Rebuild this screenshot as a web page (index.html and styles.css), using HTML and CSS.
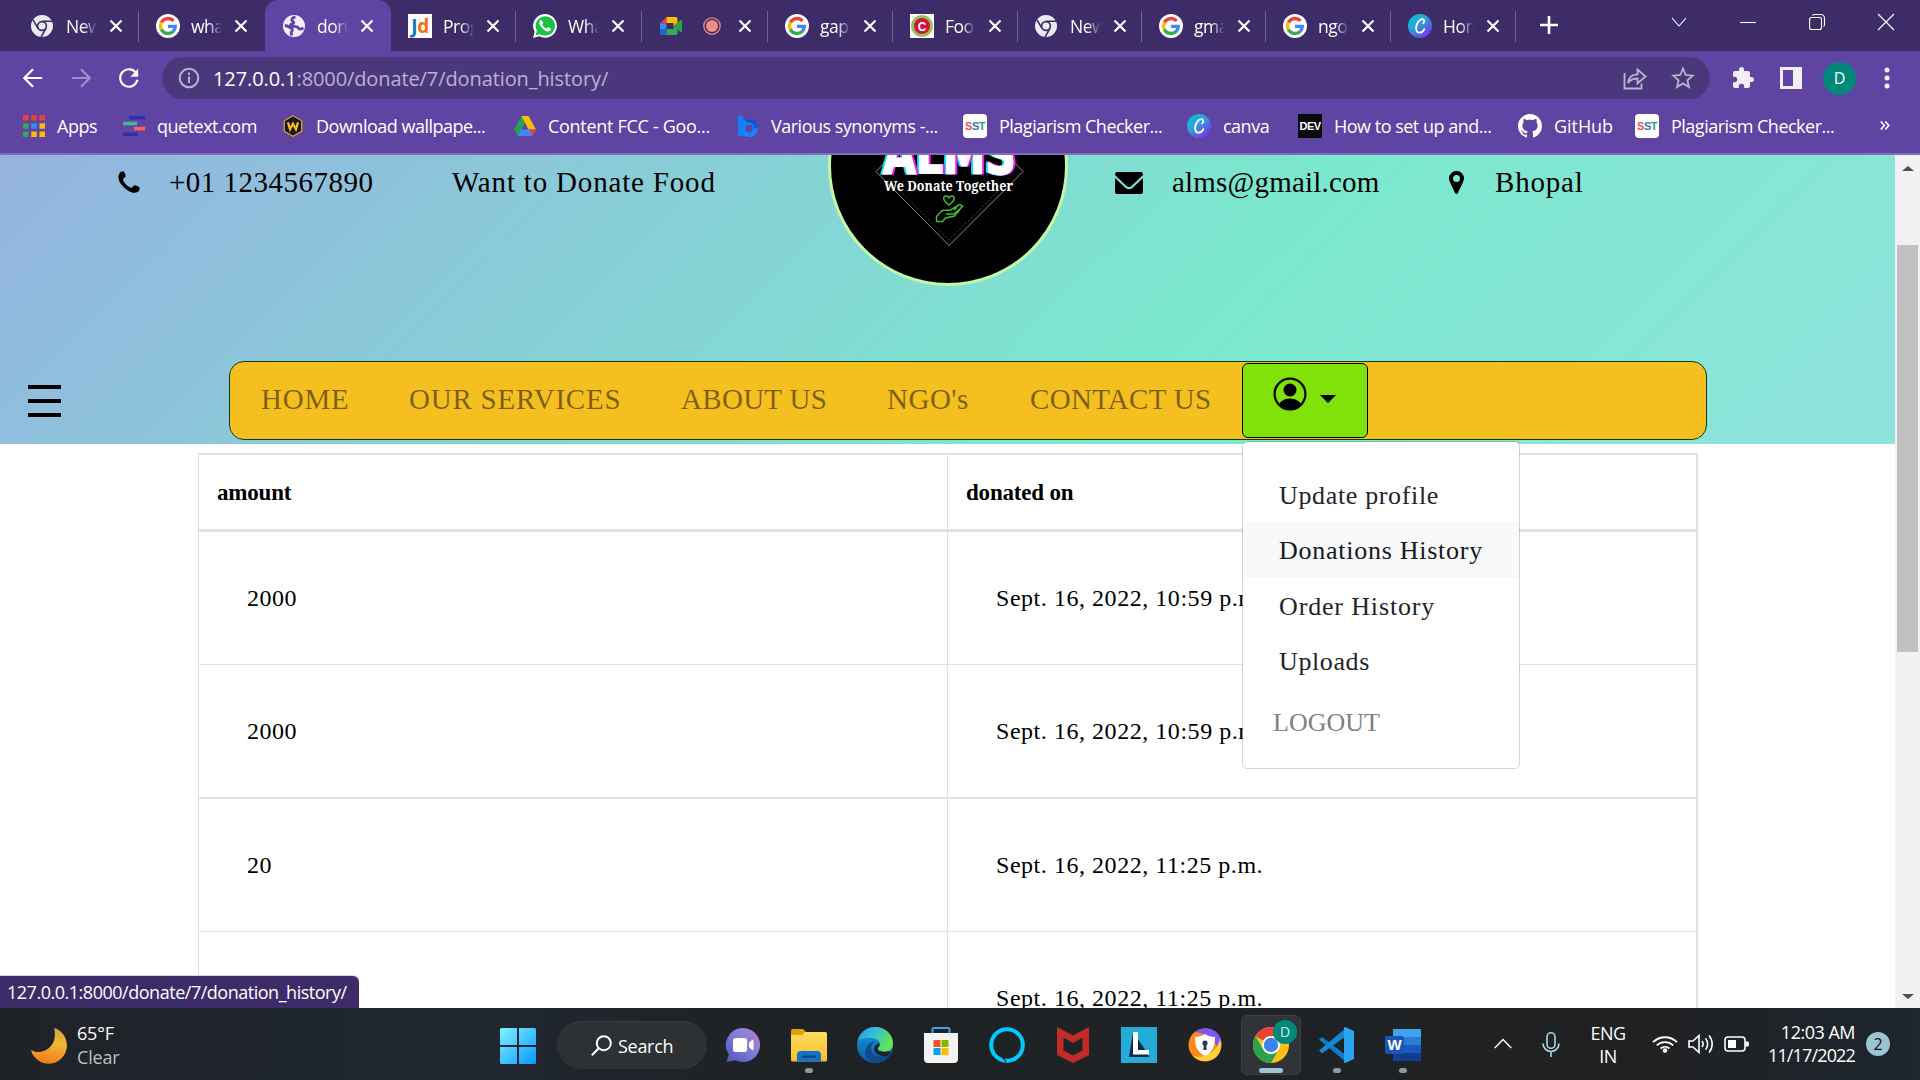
FILE: index.html
```html
<!DOCTYPE html>
<html lang="en">
<head>
<meta charset="utf-8">
<title>donation history</title>
<link rel="stylesheet" href="styles.css">
</head>
<body>
<svg class="defs" width="0" height="0">
  <defs>
    <linearGradient id="gCanva" x1="0" y1="0" x2=".8" y2="1"><stop offset="0" stop-color="#00c4cc"/><stop offset=".45" stop-color="#2aa5dc"/><stop offset="1" stop-color="#7d2ae8"/></linearGradient>
    <linearGradient id="gMoon" x1=".6" y1="0" x2=".4" y2="1"><stop offset="0" stop-color="#d9a04a"/><stop offset=".4" stop-color="#f2b632"/><stop offset="1" stop-color="#ee7d1c"/></linearGradient>
    <linearGradient id="gWin" x1="0" y1="0" x2="1" y2="1"><stop offset="0" stop-color="#7df4ff"/><stop offset="1" stop-color="#0a97ff"/></linearGradient>
    <linearGradient id="gChat" x1="0" y1="1" x2="1" y2="0"><stop offset="0" stop-color="#4f52c4"/><stop offset=".6" stop-color="#8482dc"/><stop offset="1" stop-color="#c07ab8"/></linearGradient>
    <linearGradient id="gFolder" x1="0" y1="0" x2="0" y2="1"><stop offset="0" stop-color="#ffdc60"/><stop offset="1" stop-color="#f9be2c"/></linearGradient>
    <linearGradient id="gEdge" x1="0" y1="0" x2="1" y2=".4"><stop offset="0" stop-color="#1f9fe0"/><stop offset=".5" stop-color="#35c1d8"/><stop offset="1" stop-color="#62e552"/></linearGradient>
    <linearGradient id="gEdge2" x1="0" y1="0" x2="0" y2="1"><stop offset="0" stop-color="#1b9de2"/><stop offset="1" stop-color="#0c59a8"/></linearGradient>
    <symbol id="chrome-grey" viewBox="0 0 24 24">
      <circle cx="12" cy="12" r="12" fill="#eceaf2"/>
      <circle cx="12" cy="12" r="5.7" fill="#3d2c68"/><circle cx="12" cy="12" r="3.9" fill="#eceaf2"/>
      <path d="M12 6.900h11M7.600 14.600 2.200 5.200M16.400 14.600 11 24" stroke="#3d2c68" stroke-width="1.700" fill="none"/>
    </symbol>
    <symbol id="google" viewBox="0 0 24 24">
      <circle cx="12" cy="12" r="12" fill="#fff"/>
      <g fill="none" stroke-width="3.300">
        <path d="M17.600 6.900A7.500 7.500 0 0 0 5.400 8.600" stroke="#ea4335"/>
        <path d="M5.400 8.500a7.500 7.500 0 0 0 0 7" stroke="#fbbc05"/>
        <path d="M5.400 15.400a7.500 7.500 0 0 0 11.800 2" stroke="#34a853"/>
        <path d="M17.100 17.500a7.500 7.500 0 0 0 2.300-5.200H12" stroke="#4285f4"/>
      </g>
    </symbol>
    <symbol id="canva" viewBox="0 0 24 24">
      <circle cx="12" cy="12" r="12" fill="url(#gCanva)"/>
      <path d="M15.200 9.400c1.300-1 1.600-4-.5-4.200-3.500-.2-6.600 4.600-6.600 8.900 0 3 1.600 4.600 3.500 4.600 2.200 0 3.900-1.700 4.700-3.600" fill="none" stroke="#fff" stroke-width="1.800" stroke-linecap="round"/>
    </symbol>
    <symbol id="x" viewBox="0 0 14 14"><path d="m1.500 1.500 11 11m0-11-11 11" stroke="#fff" stroke-width="2.200" fill="none"/></symbol>
  </defs>
</svg>

<div class="tabs">
  <div class="tab-list">
    <div class="tab"><svg class="fav s"><use href="#chrome-grey"/></svg><span class="title">New</span><svg class="close"><use href="#x"/></svg></div>
    <div class="tab nosep"><svg class="fav"><use href="#google"/></svg><span class="title">wha</span><svg class="close"><use href="#x"/></svg></div>
    <div class="tab active"><svg class="fav" viewBox="0 0 24 24"><circle cx="12" cy="12" r="11" fill="#f1eff8"/><path d="M13.500 3.200c-4 .3-4.500 3-2.500 4.300 1.500 1 .5 2.500-1.500 2.700-1.500.2-1.200 1.800.5 2.100 3 .4 5.500-.3 6.500 2 .5 1.300 2.500 1 5-.3M2.800 11.500c3 .2 4.700 2 6.200 2.600 1.700.8 2 2.400.5 3.700-.8.700-.4 2 .5 3.700" fill="none" stroke="#5f44a3" stroke-width="2.800"/></svg><span class="title">don</span><svg class="close"><use href="#x"/></svg></div>
    <div class="tab"><span class="fav jd"><b>J</b><i>d</i></span><span class="title">Prog</span><svg class="close"><use href="#x"/></svg></div>
    <div class="tab"><svg class="fav" viewBox="0 0 24 24"><path d="M0 24l1.700-6.200A11.900 11.900 0 1 1 6.300 22.300z" fill="#fff"/><path d="M2.600 21.400l1.300-4.600A9.700 9.700 0 1 1 7.200 20.200z" fill="#19c144"/><path d="M8.700 6.500c-.4-.9-1-.6-1.500-.3C5.500 8 6.200 10.300 8.200 12.900c2.600 3.400 5.200 4.600 7.300 4.500 1.500-.2 2.500-1.300 2.600-2.800l-3-1.500c-.7.400-1 1.500-1.800 1.300-1.700-.7-3.200-2.100-4-3.700 0-.6 1.100-1 .9-1.900z" fill="#fff"/></svg><span class="title">Wha</span><svg class="close"><use href="#x"/></svg></div>
    <div class="tab"><svg class="fav" viewBox="0 0 24 24"><path d="M1 9.500 7.500 3v6.500z" fill="#ea4335"/><path d="M7.500 3H17q1.500 0 1.500 1.500V10l-4 2V9h-7z" fill="#fbbc04"/><path d="M1 9.500h6.500V15H1z" fill="#4285f4"/><path d="M1 15h6.500v6H2.500Q1 21 1 19.500z" fill="#1967d2"/><path d="M7.500 15h7v-3l4 3v4.500q0 1.500-1.500 1.500H7.500z" fill="#34a853"/><path d="m14.500 12 7-6q1.500-.7 1.500 1v10q0 1.700-1.500 1z" fill="#2ba14b"/></svg><svg class="rec" viewBox="0 0 18 18"><circle cx="9" cy="9" r="8.200" fill="none" stroke="#f28b82" stroke-width="1.300"/><circle cx="9" cy="9" r="6" fill="#f28b82"/></svg><svg class="close"><use href="#x"/></svg></div>
    <div class="tab"><svg class="fav"><use href="#google"/></svg><span class="title">gap</span><svg class="close"><use href="#x"/></svg></div>
    <div class="tab"><svg class="fav" viewBox="0 0 24 24"><path d="M0 0h24v24H0z" fill="#fff"/><circle cx="12" cy="12" r="11" fill="#94c45e"/><circle cx="12" cy="12" r="8" fill="#d3123f"/><text x="12" y="16.500" text-anchor="middle" class="c-mark">C</text></svg><span class="title">Foo</span><svg class="close"><use href="#x"/></svg></div>
    <div class="tab"><svg class="fav s"><use href="#chrome-grey"/></svg><span class="title">New</span><svg class="close"><use href="#x"/></svg></div>
    <div class="tab"><svg class="fav"><use href="#google"/></svg><span class="title">gma</span><svg class="close"><use href="#x"/></svg></div>
    <div class="tab"><svg class="fav"><use href="#google"/></svg><span class="title">ngo</span><svg class="close"><use href="#x"/></svg></div>
    <div class="tab"><svg class="fav"><use href="#canva"/></svg><span class="title">Hon</span><svg class="close"><use href="#x"/></svg></div>
  </div>
  <svg class="plus" viewBox="0 0 18 18"><path d="M9 0v18M0 9h18" stroke="#fff" stroke-width="2.600"/></svg>
  <div class="win-controls">
    <svg viewBox="0 0 16 16"><path d="m1 4 7 8 7-8" /></svg>
    <svg viewBox="0 0 16 16"><path d="M0 8.500h16"/></svg>
    <svg viewBox="0 0 16 16"><rect x=".6" y="3.500" width="11.900" height="12" rx="2"/><path d="M3.500 1.500q.5-1 2-1h6q4 0 4 4v6q0 1.500-1 2"/></svg>
    <svg viewBox="0 0 16 16"><path d="m0 0 16 16M16 0 0 16"/></svg>
  </div>
</div>

<div class="toolbar">
  <svg class="nav-ico" viewBox="0 0 24 24"><path d="M22 12H3M12 2.500 2.500 12l9.500 9.500"/></svg>
  <svg class="nav-ico dim" viewBox="0 0 24 24"><path d="M2 12h19M12 2.500l9.500 9.500-9.500 9.500"/></svg>
  <svg class="nav-ico" viewBox="0 0 24 24"><path d="M20.300 7.500A9.500 9.500 0 1 0 21.200 14"/><path d="M22 2v8.500h-8.500z" class="solid"/></svg>
  <div class="omnibox">
    <svg class="info" viewBox="0 0 22 22"><circle cx="11" cy="11" r="9.300"/><path d="M11 9.500v6.500M11 5.600v2.400"/></svg>
    <span class="url"><b>127.0.0.1</b>:8000/donate/7/donation_history/</span>
    <svg class="share" viewBox="0 0 24 24"><path d="M1.500 7v15.500h17v-5"/><path d="M5 17c.5-5 3.500-8.500 9.500-8.700V3.500l8 7-8 6.700V12.500C10 12.500 7 14 5 17z"/></svg>
    <svg class="star" viewBox="0 0 24 24"><path d="m12 2.500 2.700 6.500 7 .6-5.300 4.600 1.600 6.900-6-3.700-6 3.700 1.600-6.900L2.300 9.600l7-.6z"/></svg>
  </div>
  <svg class="ext" viewBox="0 0 24 24"><path d="M20.500 11H19V7c0-1.100-.9-2-2-2h-4V3.500a2.500 2.500 0 0 0-5 0V5H4C2.900 5 2 5.900 2 7v3.800h1.500a2.700 2.700 0 0 1 0 5.400H2V20c0 1.100.9 2 2 2h3.800v-1.500a2.700 2.700 0 0 1 5.400 0V22H17c1.100 0 2-.9 2-2v-4h1.500a2.500 2.500 0 0 0 0-5z" fill="#f1eff8"/></svg>
  <span class="panel"></span>
  <span class="avatar">D</span>
  <svg class="dots" viewBox="0 0 6 22"><g fill="#f1eff8"><circle cx="3" cy="3" r="2.500"/><circle cx="3" cy="11" r="2.500"/><circle cx="3" cy="19" r="2.500"/></g></svg>
</div>

<div class="bookmarks">
  <div class="bm"><svg viewBox="0 0 20 20"><g fill="#ea4335"><path d="M0 0h5v5H0zM7.500 0h5v5h-5zM15 0h5v5h-5z"/></g><path d="M0 7.500h5v5H0zM0 15h5v5H0z" fill="#34a853"/><path d="M7.500 7.500h5v5h-5z" fill="#2f8df5"/><path d="M15 7.500h5v5h-5zM7.500 15h5v5h-5zM15 15h5v5h-5z" fill="#fbbc04"/></svg><span>Apps</span></div>
  <div class="bm"><svg viewBox="0 0 22 20"><path d="M6 0h16v3.500H6zM0 16.500h15V20H0z" fill="#2f2fa8"/><path d="M0 5.700h14v3.600H0z" fill="#3fb8a0"/><path d="M11 10.800h11v3.600H11z" fill="#f75f63"/></svg><span>quetext.com</span></div>
  <div class="bm"><svg viewBox="0 0 22 24"><path d="m11 .8 9.500 5.500v11.500L11 23.200 1.500 17.800V6.300z" fill="#14182c" stroke="#d49a25" stroke-width="1.500"/><path d="m5.500 8 2.300 7.500L11 9.500l3.200 6L16.500 8" fill="none" stroke="#fbb41c" stroke-width="2.500"/></svg><span>Download wallpape...</span></div>
  <div class="bm"><svg viewBox="0 0 22 20"><path d="M7.500 0h7L4 20 0 13.500z" fill="#21a453"/><path d="M7.500 0h7l7.500 13.500h-7.500z" fill="#fbbc04"/><path d="M7 13.500h15L18 20H4z" fill="#4285f4"/><path d="M15 13.500h7L18.500 20z" fill="#ea4335"/></svg><span class="tight-less">Content FCC - Goo...</span></div>
  <div class="bm"><svg viewBox="0 0 22 24"><circle cx="12" cy="14.500" r="7" fill="none" stroke="#1488fb" stroke-width="5.500"/><path d="M9 6.500c6-1 11 2 10.500 8" fill="none" stroke="#0f55d8" stroke-width="4"/><path d="M0 0l6 2v17c0 4-2 4-6 4z" fill="#1380f5"/></svg><span>Various synonyms -...</span></div>
  <div class="bm"><span class="sst"><i>S</i><b>S</b><u>T</u></span><span>Plagiarism Checker...</span></div>
  <div class="bm"><svg class="big"><use href="#canva"/></svg><span>canva</span></div>
  <div class="bm"><span class="dev">DEV</span><span>How to set up and...</span></div>
  <div class="bm"><svg class="big" viewBox="0 0 16 16"><path fill="#fff" d="M8 0C3.580 0 0 3.580 0 8c0 3.540 2.290 6.530 5.470 7.590.4.070.55-.17.55-.38 0-.19-.01-.82-.01-1.490-2.010.37-2.530-.49-2.690-.94-.09-.23-.48-.94-.82-1.130-.28-.15-.68-.52-.01-.53.630-.010 1.080.580 1.230.820.720 1.210 1.870.870 2.330.660.070-.520.280-.870.510-1.070-1.780-.200-3.640-.890-3.640-3.950 0-.870.310-1.590.820-2.150-.080-.200-.360-1.020.080-2.120 0 0 .670-.210 2.200.820.640-.180 1.320-.270 2-.270s1.360.090 2 .270c1.530-1.040 2.200-.820 2.200-.820.440 1.100.160 1.920.080 2.120.510.560.820 1.270.820 2.150 0 3.070-1.870 3.750-3.650 3.950.290.250.540.730.540 1.480 0 1.070-.010 1.930-.010 2.200 0 .210.150.460.550.380A8.010 8.010 0 0 0 16 8c0-4.420-3.580-8-8-8z"/></svg><span class="github">GitHub</span></div>
  <div class="bm"><span class="sst"><i>S</i><b>S</b><u>T</u></span><span>Plagiarism Checker...</span></div>
  <svg class="more" viewBox="0 0 10 9"><path d="m.8.500 3.500 4-3.500 4M5.300.500l3.500 4-3.500 4"/></svg>
</div>

<div class="viewport">
  <div class="page">
    <header class="hero">
      <div class="contact">
        <svg class="phone" viewBox="0 0 22 22"><path d="M1.500 2.200C2.500.8 4.800 0 5.800.5c1 1 2 4 1.800 5C7.200 6.500 5 7.200 5 8.500c.5 3 5 7.600 8.200 8.200 1.300.1 2.300-2.200 3.300-2.500 1-.2 4 1.400 5 2.300.5 1-.4 3.400-1.700 4.300-2.300 1.600-6 1.200-9.500-1.100C5.500 17 1.500 12 .6 8 .2 6 .4 4 1.500 2.200z"/></svg>
        <span class="c-phone">+01 1234567890</span>
        <span class="c-want">Want to Donate Food</span>
        <svg class="logo" viewBox="828 155 240 131">
          <circle cx="948" cy="166" r="118.500" fill="#000" stroke="#c3f7a4" stroke-width="3"/>
          <path d="m890 157-14 14.500 73 74 74-74-14-14.500" fill="none" stroke="#8c8c8c"/>
          <path d="m900 191 49 49 49-49" fill="none" stroke="#444" stroke-dasharray="2 2"/>
          <text class="alms" x="883" y="173" textLength="133" lengthAdjust="spacingAndGlyphs">ALMS</text>
          <text class="motto" x="884" y="191" textLength="129" lengthAdjust="spacingAndGlyphs">We Donate Together</text>
          <g fill="none" stroke="#48b838" stroke-width="1.500"><path d="M949 205c-7-5-6-9-3-9 1.500 0 2.500 1 3 2 .5-1 1.500-2 3-2 3 0 4 4-3 9z"/><path d="M936.500 221.500v-5l5-5.500c3-1.500 6 0 9-1l9-5.500 3 1.500-8 10-9 2-3 3.500zM946 214h8l7-6M954 210l3-3"/></g>
        </svg>
        <svg class="mail" viewBox="0 0 28 22"><path d="M2 0h24q2 0 2 3L16.500 14q-2.500 2.200-5 0L0 3q0-3 2-3z"/><path d="m0 6 10.500 10q3.500 2.500 7 0L28 6v14q0 2-2 2H2q-2 0-2-2z"/></svg>
        <span class="c-mail">alms@gmail.com</span>
        <svg class="pin" viewBox="0 0 15 23"><path fill-rule="evenodd" d="M7.500 0A7.300 7.300 0 0 1 15 7.500c0 3-4 9.500-6 14.500q-1.500 1.800-3 0C4 17 0 10.500 0 7.500A7.300 7.300 0 0 1 7.500 0zm0 4a3.500 3.500 0 1 0 0 7 3.500 3.500 0 0 0 0-7z"/></svg>
        <span class="c-city">Bhopal</span>
      </div>
      <div class="nav-row">
        <div class="burger"><i></i><i></i><i></i></div>
        <nav class="navbar">
          <a class="n1">HOME</a><a class="n2">OUR SERVICES</a><a class="n3">ABOUT US</a><a class="n4">NGO's</a><a class="n5">CONTACT US</a>
          <div class="user">
            <svg viewBox="0 0 34 34"><defs><clipPath id="uc"><circle cx="17" cy="17" r="16"/></clipPath></defs><circle cx="17" cy="17" r="15.400" fill="none" stroke="#000" stroke-width="2.200"/><circle cx="17" cy="13" r="6.500"/><ellipse cx="17" cy="30" rx="11.500" ry="8.500" clip-path="url(#uc)"/></svg>
            <span class="caret"></span>
            <div class="menu">
              <a class="m1">Update profile</a><a class="hover m2">Donations History</a><a class="m3">Order History</a><a class="m4">Uploads</a><a class="logout">LOGOUT</a>
            </div>
          </div>
        </nav>
      </div>
    </header>
    <div class="table">
      <div class="row head"><div>amount</div><div>donated on</div></div>
      <div class="row"><div>2000</div><div>Sept. 16, 2022, 10:59 p.m.</div></div>
      <div class="row thick"><div>2000</div><div>Sept. 16, 2022, 10:59 p.m.</div></div>
      <div class="row"><div>20</div><div>Sept. 16, 2022, 11:25 p.m.</div></div>
      <div class="row"><div>20</div><div>Sept. 16, 2022, 11:25 p.m.</div></div>
    </div>
  </div>
  <div class="scrollbar"><span class="up"></span><span class="thumb"></span><span class="down"></span></div>
  <div class="status">127.0.0.1:8000/donate/7/donation_history/</div>
</div>

<div class="taskbar">
  <div class="weather">
    <svg viewBox="0 0 36 36"><path d="M23 0C33 3 38 13 35 23 31 35 17 39 8 33 4 30 1 27 0 22c5 3 12 3 18-2 6-5 7-13 5-20z" fill="url(#gMoon)"/></svg>
    <div><span class="temp">65°F</span><span class="clear">Clear</span></div>
  </div>
  <svg class="start" viewBox="0 0 36 36"><path d="M1.500 0H17v17H0V1.500Q0 0 1.500 0zM19 0h15.500Q36 0 36 1.500V17H19zM0 19h17v17H1.500Q0 36 0 34.500zM19 19h17v15.500q0 1.500-1.500 1.500H19z" fill="url(#gWin)"/></svg>
  <div class="search"><svg viewBox="0 0 20 20"><circle cx="12.200" cy="7.800" r="6.700"/><path d="M7.400 12.600.8 19.300"/></svg><span>Search</span></div>
  <div class="apps">
    <div class="app"><svg viewBox="0 0 36 36"><path d="M18 1a17 17 0 1 1-7.500 32.200L1.500 35l2.300-7.500A17 17 0 0 1 18 1z" fill="url(#gChat)"/><rect x="8" y="11" width="14" height="14" rx="2.500" fill="#fff"/><path d="m24 16 3-3q1.500-.8 1.500 1v8q0 1.800-1.500 1l-3-3z" fill="#fff"/></svg></div>
    <div class="app run"><svg viewBox="0 0 36 36"><path d="M0 10V3.500Q0 2 1.500 2H12l3 3v6z" fill="#e2a100"/><path d="M0 8h11l3-3h20.500Q36 5 36 6.500V33q0 1.500-1.500 1.500h-33Q0 34.500 0 33z" fill="url(#gFolder)"/><path d="M6 34.500V28q0-4 4-4h16q4 0 4 4v6.500z" fill="#1173c8"/><path d="M11 29.500h14" stroke="#073d77" stroke-width="2"/></svg></div>
    <div class="app"><svg viewBox="0 0 36 36"><circle cx="18" cy="18" r="18" fill="url(#gEdge2)"/><path d="M1 13C4 4 11 0 18 0c11 0 18 8 18 16 0 6-4 9-9 9-4 0-6-1-6-3s2-2 2-5c0-4-5-6-9-6-6 0-11 1-13 2z" fill="url(#gEdge)"/><path d="M14 21c0 6 6 11 19 7-3 5-8 8-15 8C10 35 7 28 9 22c1-4 5-7 9-8-2 2-4 4-4 7z" fill="#114a8b"/><path d="M22 16c2 3-2 4-1 6.500 1 2 7 3 11 1.500l2 1.500-2.500 3c-8 2-14.500-2-14.500-6.500 0-3 2-5 5-6z" fill="#1f242a"/></svg></div>
    <div class="app"><svg viewBox="0 0 36 36"><path d="M9.500 8V2.500q0-1.500 1.500-1.500h14q1.500 0 1.500 1.500V8" fill="none" stroke="#37a6ee" stroke-width="2"/><path d="M1 6h34v26q0 4-4 4H5q-4 0-4-4z" fill="#f3f3f3"/><path d="M10.500 13h7v7h-7z" fill="#f25022"/><path d="M18.500 13h7v7h-7z" fill="#7fba00"/><path d="M10.500 21h7v7h-7z" fill="#00a4ef"/><path d="M18.500 21h7v7h-7z" fill="#ffb900"/></svg></div>
    <div class="app"><svg viewBox="0 0 36 36"><circle cx="18" cy="18" r="15.800" fill="none" stroke="#00caff" stroke-width="4"/><path d="M13.500 31c2 .8 3 1.800 3.300 4.500" fill="none" stroke="#1f2326" stroke-width="1.200"/></svg></div>
    <div class="app"><svg viewBox="0 0 36 36"><path d="m2 0 16 8.500L34 0v28l-16 8L2 28zM8.500 10.500v13L18 28.500l9.500-5v-13L18 16z" fill="#c32b2b" fill-rule="evenodd"/></svg></div>
    <div class="app"><svg viewBox="0 0 36 36"><path d="M0 0h36v36H0z" fill="#24acd9"/><path d="m12 5-4 25h20l-1-3z" fill="#0d2b4d"/><path d="M12 5h5v18h11v4.500H12z" fill="#fff"/></svg></div>
    <div class="app"><svg viewBox="0 0 36 36"><circle cx="18" cy="18" r="16.500" fill="#ff8a1c"/><path d="M8 5C16-1 28 0 33 10c3 6 1 12-2 16 0-10-8-19-23-21z" fill="#8155f0"/><path d="M33 12c4 12-4 22-15 22-5 0-9-2-12-5 10 3 24-3 27-17z" fill="#ffd23c"/><path d="M18 7c3 2 6 3 10 3 0 9-2 15-10 19C10 25 8 19 8 10c4 0 7-1 10-3z" fill="#fff"/><circle cx="18" cy="16" r="2.600" fill="#2c3655"/><path d="m16.800 17-.5 6h3.400l-.5-6z" fill="#2c3655"/></svg></div>
    <div class="app run current"><svg viewBox="0 0 36 36"><circle cx="18" cy="18" r="18" fill="#fbc116"/><path d="M18 0A18 18 0 0 1 33.600 9H18a9 9 0 0 0-7.800 4.500L2.400 9A18 18 0 0 1 18 0z" fill="#ea4335"/><path d="M2.400 9a18 18 0 0 0 15.600 27l7.800-13.500a9 9 0 0 1-15.600 0z" fill="#2ba24c"/><circle cx="18" cy="18" r="9" fill="#fff"/><circle cx="18" cy="18" r="7.200" fill="#3b82f0"/></svg><span class="badge">D</span></div>
    <div class="app run"><svg viewBox="0 0 36 36"><path d="M0 12.500 3 10l24 18v7z" fill="#0f7cc6"/><path d="M0 23.500 3 26.500 27 9V1z" fill="#1488d4"/><path d="M26 0l9 4v28l-9 4q-1.500 0-1-3V3q-.5-3 1-3z" fill="#2aa4f2"/></svg></div>
    <div class="app run"><svg viewBox="0 0 36 36"><path d="M8 2h28v9H8z" fill="#41a5ee"/><path d="M8 10h28v8H8z" fill="#2b7cd3"/><path d="M8 18h28v8H8z" fill="#185abd"/><path d="M8 26h28v8H8z" fill="#103f91"/><rect y="9" width="19" height="18" rx="2" fill="#1a56b8"/><text x="9.500" y="23" text-anchor="middle" class="w-mark">W</text></svg></div>
  </div>
  <div class="tray">
    <svg class="chev" viewBox="0 0 18 11"><path d="m.7 10 8.300-8.500L17.300 10" stroke="#fff" stroke-width="1.400" fill="none"/></svg>
    <svg class="mic" viewBox="0 0 18 25"><g fill="none" stroke="#a9dbe6" stroke-width="1.600"><rect x="5" y=".8" width="8" height="15.500" rx="4"/><path d="M1 11.500a8 8 0 0 0 16 0M9 19.500V25"/></g></svg>
    <div class="lang"><span>ENG</span><span>IN</span></div>
    <svg class="wifi" viewBox="0 0 26 19"><g fill="none" stroke="#fff" stroke-width="1.800"><path d="M1 8.200a17 17 0 0 1 24 0M4.800 11.400a12 12 0 0 1 16.400 0M8.500 14.500a7 7 0 0 1 9 0"/></g><circle cx="13" cy="16.500" r="2.300" fill="#fff"/></svg>
    <svg class="vol" viewBox="0 0 26 20"><g fill="none" stroke="#fff" stroke-width="1.600"><path d="M1 7h4l6-5.500v17L5 13H1zM14 7a5 5 0 0 1 0 6M17.500 4.200a9 9 0 0 1 0 11.600M21 1.500a13 13 0 0 1 0 17"/></g></svg>
    <svg class="bat" viewBox="0 0 25 16"><rect x="1" y="1" width="20" height="14" rx="3" fill="none" stroke="#fff" stroke-width="1.600"/><path d="M4 4h8v8H4zM21.500 5.500H24q1 0 1 2.500t-1 2.500h-2.500z" fill="#fff"/></svg>
    <div class="clock"><span>12:03 AM</span><span class="date">11/17/2022</span></div>
    <span class="count">2</span>
  </div>
</div>
</body>
</html>
```
FILE: styles.css
```css
* { box-sizing: border-box; }
body { margin: 0; width: 1920px; height: 1080px; overflow: hidden; background: #fff; font-family: "Open Sans", "Noto Sans", sans-serif; color: #fff; display: flex; flex-direction: column; }
svg { display: block; flex: none; }
.defs { position: absolute; }

/* tab strip */
.tabs { height: 51px; flex: none; background: #3d2c68; display: flex; padding-left: 14px; }
.tab-list { display: grid; grid-template-columns: 125px 126px 126px 125px 126px 126px 125px 125px 124px 124px 125px 125px; width: 1502px; }
.tab { display: flex; align-items: center; padding-left: 17px; border-right: 1px solid #71639a; border-image: linear-gradient(transparent 12px, #71639a 12px, #71639a 41px, transparent 41px) 1; }
.tab.nosep, .tab.active { border-image: none; border-color: transparent; }
.tab.active { background: #5f44a3; border: 0; border-radius: 13px 13px 0 0; }
.fav { width: 24px; height: 24px; margin-right: 11px; flex: none; }
.fav.s { width: 22px; height: 22px; margin-right: 13px; }
.title { width: 31px; font-size: 17.5px; letter-spacing: -.5px; white-space: nowrap; overflow: hidden; -webkit-mask-image: linear-gradient(90deg, #000 55%, transparent); mask-image: linear-gradient(90deg, #000 55%, transparent); }
.close { width: 14px; height: 14px; margin-left: 12px; }
.rec { width: 18px; height: 18px; margin: 0 4px 0 9px; }
.rec + .close { margin-left: 13px; }
.jd { background: #fff; color: #0f75bc; font-size: 19px; line-height: 24px; text-align: center; letter-spacing: -.5px; }
.jd i { font-style: normal; font-weight: 700; color: #f36f10; }
.c-mark { font: 700 12px "Liberation Sans", sans-serif; fill: #fff; }
.w-mark { font: 700 15px "Liberation Sans", sans-serif; fill: #fff; }
.plus { width: 18px; height: 18px; margin: 16px 0 0 24px; }
.win-controls { display: flex; gap: 53px; margin: 14px 0 0 113px; }
.win-controls svg { width: 16px; height: 16px; fill: none; stroke: #fff; stroke-width: 1.1; overflow: visible; }

/* toolbar */
.toolbar { height: 54px; flex: none; background: #5f44a3; display: flex; align-items: center; padding-left: 22px; }
.nav-ico { width: 22px; height: 22px; margin-right: 26px; fill: none; stroke: #fff; stroke-width: 2.4; }
.nav-ico .solid { fill: #fff; stroke: none; }
.nav-ico.dim { stroke: #a08fc8; }
.omnibox { width: 1548px; height: 42px; margin-left: -4px; border-radius: 21px; background: #4b387c; display: flex; align-items: center; padding-left: 16px; }
.info { width: 22px; height: 22px; fill: none; stroke: #bcb3cf; stroke-width: 2; }
.url { margin-left: 13px; width: 1410px; font-size: 20px; letter-spacing: -.1px; color: #bcb1d4; }
.url b { font-weight: 400; color: #fff; }
.share, .star { width: 24px; height: 24px; fill: none; stroke: #bcb3cf; stroke-width: 1.8; }
.star { margin-left: 24px; }
.ext { width: 24px; height: 24px; margin-left: 21px; }
.panel { width: 22px; height: 22px; margin-left: 25px; border: 3px solid #f1eff8; border-right-width: 9px; }
.avatar { width: 33px; height: 33px; border-radius: 50%; margin-left: 21px; background: #00897b; font-size: 16px; line-height: 33px; text-align: center; }
.dots { width: 6px; height: 22px; margin-left: 28px; }

/* bookmarks */
.bookmarks { height: 50px; flex: none; background: #5f44a3; border-bottom: 2px solid #826eb8; padding: 0 0 7px 23px; display: grid; grid-template-columns: 100px 159px 232px 223px 226px 224px 111px 220px 117px 245px auto; align-items: center; }
.bm { display: flex; align-items: center; gap: 12px; font-size: 18px; letter-spacing: -.5px; white-space: nowrap; }
.tight-less { letter-spacing: -.3px; }
.github { letter-spacing: -.05px; }
.bm svg { width: 22px; height: 22px; }
.bm svg.big { width: 24px; height: 24px; }
.sst, .dev { width: 24px; height: 24px; flex: none; background: #fff; border-radius: 4px; font: 700 11px/24px "Liberation Sans", sans-serif; text-align: center; letter-spacing: -.5px; }
.sst i { font-style: normal; color: #e3515a; } .sst b { color: #4174b4; } .sst u { text-decoration: none; color: #2f9c77; }
.dev { background: #0a0a0a; border-radius: 0; }
.more { width: 10px; height: 9px; fill: none; stroke: #fff; stroke-width: 1.6; }

/* web page */
.viewport { height: 853px; flex: none; display: flex; position: relative; overflow: hidden; }
.page { width: 1895px; color: #000; font-family: "Liberation Serif", serif; }
.hero { height: 289px; background: linear-gradient(135deg, #95b3e0 0%, #7be8ce 62%, #90e3dc 100%); }
.contact { height: 206px; display: flex; align-items: flex-start; font-size: 29px; line-height: 34px; white-space: nowrap; }
.contact span { margin-top: 10px; flex: none; letter-spacing: .6px; }
.phone { width: 22px; height: 22px; margin: 16px 29px 0 118px; }
.contact .c-phone { width: 283px; letter-spacing: .5px; }
.contact .c-want { width: 376px; letter-spacing: .82px; }
.logo { width: 240px; height: 131px; }
.alms { font: 700 56px "DejaVu Sans", sans-serif; fill: #fff; stroke: #fff; stroke-width: 2; filter: drop-shadow(2px 0 0 #f21be8) drop-shadow(-2px 0 0 #12dff0); }
.motto { font: 700 14px "Noto Serif", "Liberation Serif", serif; fill: #fff; }
.mail { width: 28px; height: 22px; margin: 17px 29px 0 47px; }
.contact .c-mail { width: 277px; letter-spacing: .2px; }
.pin { width: 15px; height: 23px; margin: 16px 31px 0 0; }
.contact .c-city { letter-spacing: .8px; }
.nav-row { display: flex; }
.burger { width: 33px; margin: 24px 168px 0 28px; display: flex; flex-direction: column; gap: 10px; }
.burger i { height: 4px; background: #000; }
.navbar { width: 1478px; height: 79px; border: 1px solid #063d1a; border-radius: 15px; background: #f6bf20; display: flex; padding-left: 31px; font-size: 29px; line-height: 74px; color: rgba(0,0,0,.5); white-space: nowrap; }
.n1 { width: 148px; letter-spacing: .8px; }
.n2 { width: 272px; letter-spacing: .77px; }
.n3 { width: 206px; letter-spacing: .3px; }
.n4 { width: 143px; letter-spacing: .5px; }
.n5 { width: 212px; letter-spacing: .3px; }
.user { width: 126px; height: 75px; margin-top: 1px; border: 1px solid #000; border-radius: 6px; background: #80e208; position: relative; display: flex; padding: 13px 0 0 30px; }
.user svg { width: 34px; height: 34px; }
.caret { border: 8px solid transparent; border-top-color: #000; margin: 18px 0 0 13px; height: 8px; border-bottom: 0; }
.menu { position: absolute; left: -1px; top: 77px; width: 278px; height: 328px; border: 1px solid rgba(0,0,0,.17); border-radius: 5px; background: #fff; background-clip: padding-box; display: flex; flex-direction: column; padding-top: 24.5px; font-size: 26px; line-height: 57px; color: #212529; z-index: 2; }
.menu a { height: 55.5px; padding-left: 36px; }
.menu .hover { background: #f8f9fa; color: #16181b; }
.m1 { letter-spacing: .65px; }
.m2 { letter-spacing: .74px; }
.m3 { letter-spacing: .85px; }
.m4 { letter-spacing: .6px; }
.menu .logout { margin-top: 5px; padding-left: 30px; color: #7f7f7f; }
.table { margin: 9px 0 0 198px; width: 1500px; border: solid #dee2e6; border-width: 2px 2px 0 1px; font-size: 24px; }
.row { display: grid; grid-template-columns: 749px 1fr; height: 133px; border-bottom: 1px solid #dee2e6; line-height: 133px; letter-spacing: .54px; }
.row.thick { height: 134px; border-bottom-width: 2px; }
.row div { padding-left: 48px; }
.row div:first-child { border-right: 1px solid #dee2e6; }
.row.head { height: 77px; border-bottom-width: 3px; line-height: 75px; font-size: 23px; font-weight: 700; letter-spacing: -.2px; }
.row.head div { padding-left: 18px; height: 74px; }
.scrollbar { width: 25px; background: #f1f1f1; display: flex; flex-direction: column; align-items: center; }
.up, .down { border: 6px solid transparent; border-top: 0; border-bottom: 5px solid #505050; margin-top: 11px; }
.thumb { width: 21px; height: 407px; background: #c1c1c1; margin: 74px 0 342px; }
.down { border-bottom: 0; border-top: 5px solid #505050; margin: 0; }
.status { position: absolute; left: 0; bottom: 0; width: 359px; height: 32px; border-radius: 0 6px 0 0; background: #3d2c68; box-shadow: 0 -1px 0 #d8d5e0; padding-left: 7px; font-size: 18px; line-height: 33px; letter-spacing: -.48px; }

/* taskbar */
.taskbar { height: 72px; flex: none; background: linear-gradient(90deg, #1f2328, #202731 25%, #1f2225 40%, #1f2326 60%, #202122 85%, #1e2630); display: flex; white-space: nowrap; }
.weather { width: 470px; padding: 0 0 0 31px; display: flex; font-size: 18px; letter-spacing: -.2px; }
.weather svg { width: 36px; height: 36px; margin: 20px 10px 0 0; }
.weather div { display: flex; flex-direction: column; padding-top: 13px; line-height: 24px; }
.clear { color: #bdc0c4; }
.start { width: 36px; height: 36px; margin: 20px 0 0 30px; }
.search { width: 150px; height: 48px; margin: 13px 0 0 21px; border-radius: 24px; background: #2e3134; border-top: 1px solid #3b3e42; display: flex; align-items: center; padding-left: 34px; gap: 6px; font-size: 18px; letter-spacing: -.3px; }
.search svg { width: 21px; height: 21px; fill: none; stroke: #fff; stroke-width: 1.9; }
.apps { display: flex; padding: 7px 0 0 6px; gap: 6px; }
.app { width: 60px; height: 60px; padding: 12px 0 0 12px; border-radius: 6px; position: relative; }
.app svg { width: 36px; height: 36px; }
.app.current { background: #303438; border: 1px solid #3b3f43; padding: 11px 0 0 11px; }
.app.run::after { content: ""; position: absolute; left: 26px; bottom: 2px; width: 8px; height: 5px; border-radius: 3px; background: #94979a; }
.app.current::after { left: 17px; width: 24px; background: #9cc5d3; bottom: 1px; }
.badge { position: absolute; left: 31px; top: 4px; width: 24px; height: 24px; border-radius: 50%; background: #00897b; font-size: 14px; line-height: 24px; text-align: center; color: #d6efe9; }
.tray { display: flex; flex: 1; font-size: 18px; line-height: 23px; }
.chev { width: 18px; height: 11px; margin: 30px 29px 0 61px; }
.mic { width: 18px; height: 25px; margin: 24px 27px 0 1px; }
.lang { width: 42px; margin-top: 14px; text-align: center; display: flex; flex-direction: column; align-items: center; letter-spacing: -.5px; }
.wifi { width: 26px; height: 19px; margin: 26px 0 0 23px; }
.vol { width: 26px; height: 20px; margin: 26px 0 0 10px; }
.bat { width: 25px; height: 16px; margin: 28px 0 0 10px; }
.clock { width: 106px; margin-top: 13px; display: flex; flex-direction: column; align-items: flex-end; letter-spacing: -.5px; }
.date { letter-spacing: -.85px; }
.count { width: 24px; height: 24px; margin: 24px 0 0 11px; border-radius: 50%; background: #9cc5d3; color: #111; font-size: 16px; line-height: 24px; text-align: center; }
```
